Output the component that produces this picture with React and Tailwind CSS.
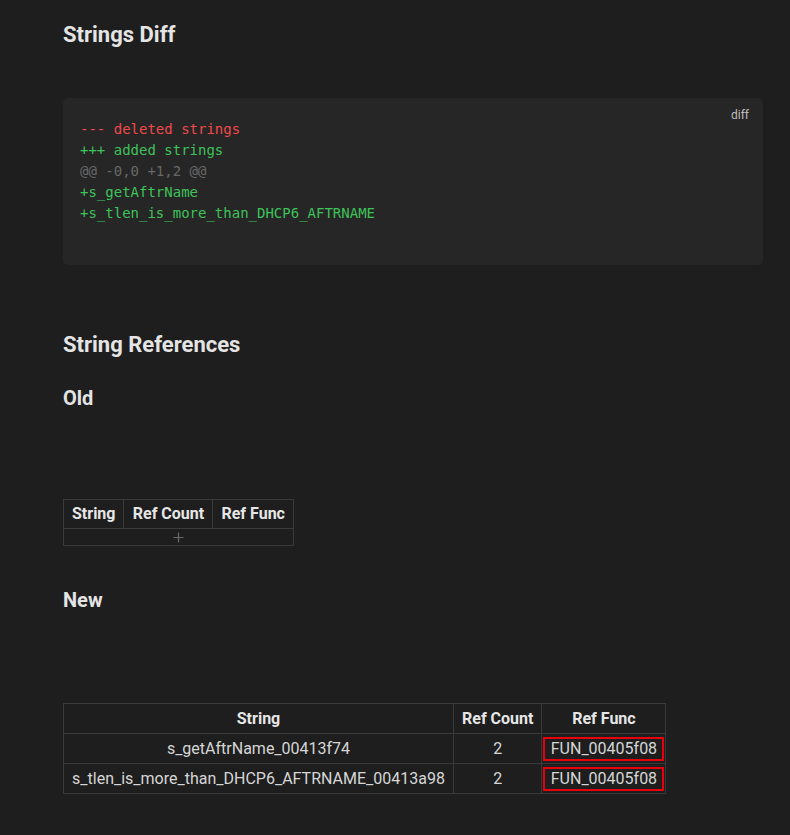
export default function App() {
  const font = { fontFamily: "Roboto, 'Noto Sans', sans-serif" };
  const th = "border border-[#3a3a3a] px-[8px] h-[29px] text-[16px] font-bold text-[#e6e6e6] text-center leading-[20px] whitespace-nowrap";
  const td = "border border-[#3a3a3a] px-[8px] h-[30px] text-[16px] text-[#d6d6d6] text-center leading-[20px] whitespace-nowrap";
  return (
    <div className="min-h-[835px] w-[790px] bg-[#1e1e1e]" style={font}>
      <div className="ml-[63px] w-[700px] pt-[22px] pb-[40px]">
        <h2 className="text-[22px] leading-[26px] font-bold text-[#e4e4e4]">Strings Diff</h2>

        <div className="relative mt-[50px] rounded-[5px] bg-[#262626] pt-[21px] pb-[41px] pl-[17px] pr-[16px]">
          <span className="absolute right-[14px] top-[10px] text-[12px] leading-[14px] text-[#bdbdbd]">diff</span>
          <pre className="text-[14px] leading-[21px] m-0" style={{ fontFamily: "'DejaVu Sans Mono', 'Liberation Mono', monospace" }}>
            <div className="text-[#f0494a]">--- deleted strings</div>
            <div className="text-[#3ec25a]">+++ added strings</div>
            <div className="text-[#686868]">@@ -0,0 +1,2 @@</div>
            <div className="text-[#3ec25a]">+s_getAftrName</div>
            <div className="text-[#3ec25a]">+s_tlen_is_more_than_DHCP6_AFTRNAME</div>
          </pre>
        </div>

        <h2 className="mt-[67px] text-[22px] leading-[26px] font-bold text-[#e4e4e4]">String References</h2>
        <h3 className="mt-[28px] text-[20px] leading-[24px] font-bold text-[#e4e4e4]">Old</h3>

        <table className="mt-[89px] border-collapse">
          <thead>
            <tr>
              <th className={th + " w-[60px]"}>String</th>
              <th className={th + " w-[89px]"}>Ref Count</th>
              <th className={th + " w-[79px]"}>Ref Func</th>
            </tr>
          </thead>
          <tbody>
            <tr>
              <td colSpan={3} className="border border-[#3a3a3a] h-[17px] p-0">
                <div className="flex items-center justify-center h-[15px]">
                  <svg width="11" height="11" viewBox="0 0 11 11">
                    <path d="M5.5 0.5v10M0.5 5.5h10" stroke="#6a6a6a" strokeWidth="1.2" />
                  </svg>
                </div>
              </td>
            </tr>
          </tbody>
        </table>

        <h3 className="mt-[42px] text-[20px] leading-[24px] font-bold text-[#e4e4e4]">New</h3>

        <table className="mt-[91px] border-collapse">
          <thead>
            <tr>
              <th className={th + " w-[390px] h-[30px]"}>String</th>
              <th className={th + " w-[88px] h-[30px]"}>Ref Count</th>
              <th className={th + " w-[124px] h-[30px]"}>Ref Func</th>
            </tr>
          </thead>
          <tbody>
            {[
              ["s_getAftrName_00413f74", "2", "FUN_00405f08"],
              ["s_tlen_is_more_than_DHCP6_AFTRNAME_00413a98", "2", "FUN_00405f08"],
            ].map((r, i) => (
              <tr key={i}>
                <td className={td}>{r[0]}</td>
                <td className={td}>{r[1]}</td>
                <td className="border border-[#3a3a3a] h-[30px] p-[1px] text-[16px] text-[#d6d6d6] text-center leading-[20px] whitespace-nowrap">
                  <div className="border-2 border-[#e8000b] h-[24px] flex items-center justify-center">{r[2]}</div>
                </td>
              </tr>
            ))}
          </tbody>
        </table>
      </div>
    </div>
  );
}
